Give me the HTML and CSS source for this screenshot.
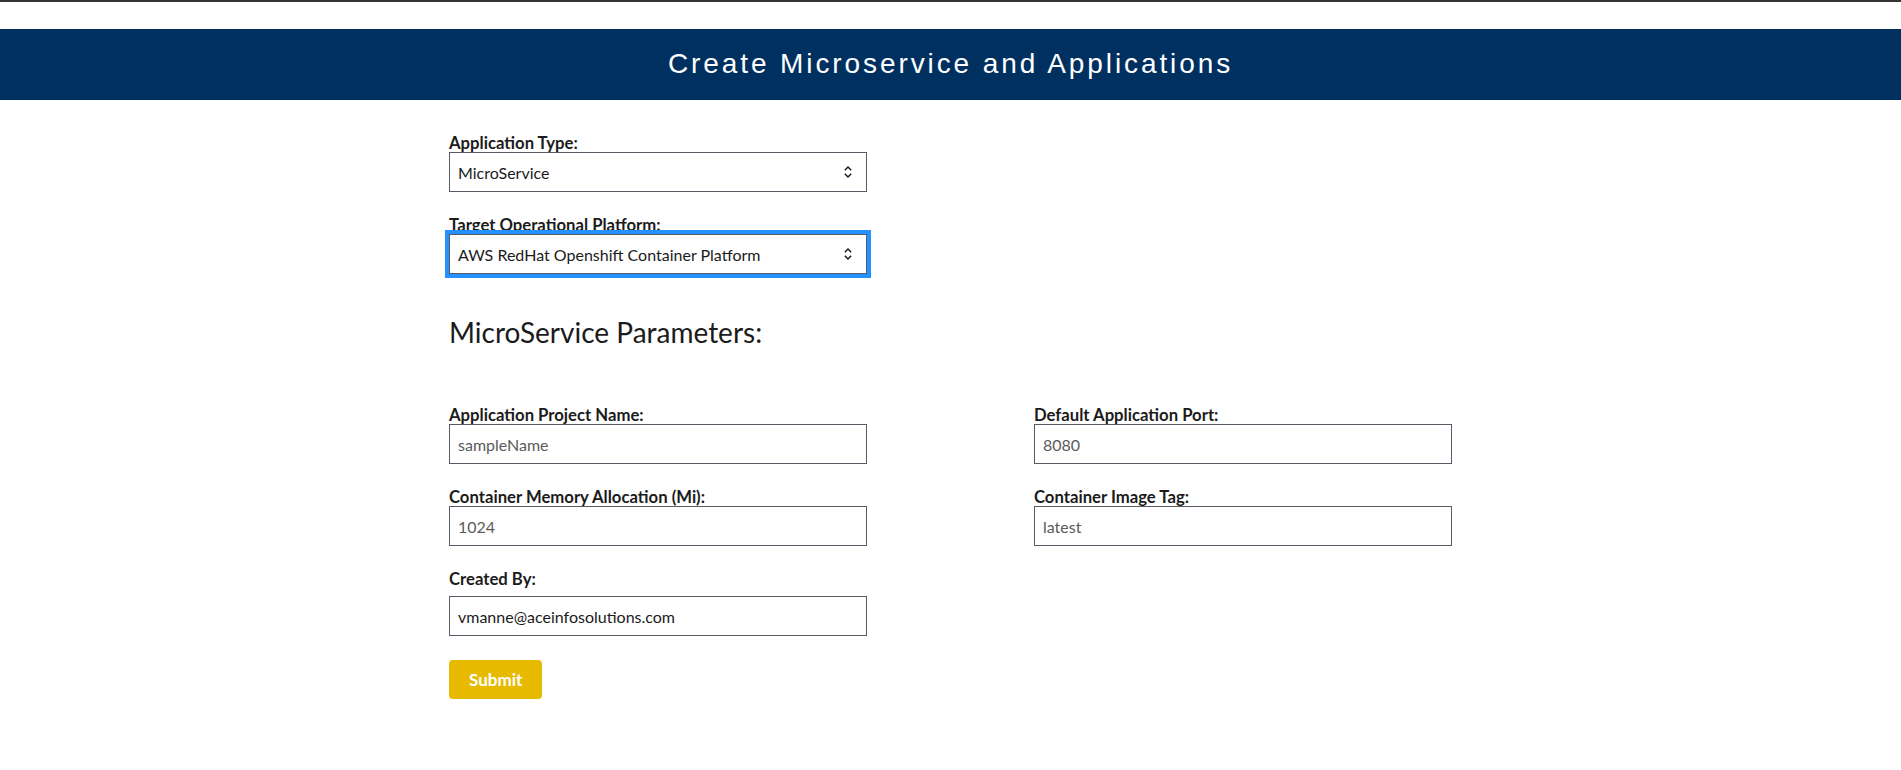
FILE: index.html
```html
<!DOCTYPE html>
<html lang="en">
<head>
<meta charset="utf-8">
<title>Create Microservice and Applications</title>
<link rel="stylesheet" href="styles.css">
</head>
<body>
<div class="topline"></div>
<header class="banner">
  <h1 class="banner-title">Create Microservice and Applications</h1>
</header>
<main class="page">
  <form class="form">
    <div class="field">
      <label class="label" for="apptype">Application Type:</label>
      <div class="select-wrap">
        <select class="select" id="apptype">
          <option>MicroService</option>
        </select>
        <svg class="chev" width="10" height="16" viewBox="0 0 10 16" aria-hidden="true">
          <path d="M1.8 6.2 L5 3 L8.2 6.2" fill="none" stroke="#1b1b1b" stroke-width="1.5"/>
          <path d="M1.8 9.8 L5 13 L8.2 9.8" fill="none" stroke="#1b1b1b" stroke-width="1.5"/>
        </svg>
      </div>
    </div>
    <div class="field">
      <label class="label" for="platform">Target Operational Platform:</label>
      <div class="select-wrap">
        <select class="select focused" id="platform">
          <option>AWS RedHat Openshift Container Platform</option>
        </select>
        <svg class="chev" width="10" height="16" viewBox="0 0 10 16" aria-hidden="true">
          <path d="M1.8 6.2 L5 3 L8.2 6.2" fill="none" stroke="#1b1b1b" stroke-width="1.5"/>
          <path d="M1.8 9.8 L5 13 L8.2 9.8" fill="none" stroke="#1b1b1b" stroke-width="1.5"/>
        </svg>
      </div>
    </div>

    <h2 class="section-title">MicroService Parameters:</h2>

    <div class="grid">
      <div class="field">
        <label class="label" for="pname">Application Project Name:</label>
        <input class="input" id="pname" type="text" placeholder="sampleName">
      </div>
      <div class="field">
        <label class="label" for="port">Default Application Port:</label>
        <input class="input" id="port" type="text" placeholder="8080">
      </div>
      <div class="field">
        <label class="label" for="mem">Container Memory Allocation (Mi):</label>
        <input class="input" id="mem" type="text" placeholder="1024">
      </div>
      <div class="field">
        <label class="label" for="tag">Container Image Tag:</label>
        <input class="input" id="tag" type="text" placeholder="latest">
      </div>
      <div class="field">
        <label class="label" for="by">Created By:</label>
        <input class="input input-spaced" id="by" type="text" value="vmanne@aceinfosolutions.com">
      </div>
    </div>

    <button class="button" type="button">Submit</button>
  </form>
</main>
</body>
</html>
```

FILE: styles.css
```css
* { box-sizing: border-box; }

html, body {
  margin: 0;
  padding: 0;
  background: #ffffff;
  font-family: "Lato", "Liberation Sans", sans-serif;
  color: #1b1b1b;
}

.topline {
  height: 2px;
  background: #333333;
}

.banner {
  margin-top: 27px;
  height: 71px;
  background: #00305f;
  display: flex;
  align-items: center;
  justify-content: center;
}

.banner-title {
  margin: 0;
  color: #ffffff;
  font-family: "Liberation Sans", Arial, sans-serif;
  font-weight: 400;
  font-size: 28px;
  letter-spacing: 2.9px;
  line-height: 1;
  padding-bottom: 2px;
}

.page {
  width: 1003px;
  margin: 0 auto;
  padding-top: 10px;
}

.form { margin: 0; }

.field {
  width: 418px;
}

.label {
  display: block;
  margin-top: 24px;
  font-weight: 700;
  font-size: 16.7px;
  line-height: 18px;
  color: #1b1b1b;
}

.select-wrap {
  position: relative;
  width: 418px;
}

.select,
.input {
  display: block;
  width: 418px;
  height: 40px;
  margin: 0;
  padding: 0 8px;
  border: 1px solid #565c65;
  border-radius: 0;
  background: #ffffff;
  font-family: "Lato", "Liberation Sans", sans-serif;
  font-size: 16px;
  color: #1b1b1b;
}

.select {
  -webkit-appearance: none;
  appearance: none;
  padding-right: 32px;
}

.focused {
  outline: 4px solid #2491ff;
  outline-offset: 0;
}

.chev {
  position: absolute;
  right: 14px;
  top: 12px;
  pointer-events: none;
}

.input::placeholder {
  color: #5b5b5b;
  opacity: 1;
}

.input-spaced { margin-top: 8px; }

.section-title {
  margin: 41px 0 33px;
  font-weight: 400;
  font-size: 28px;
  line-height: 34px;
  color: #1b1b1b;
}

.grid {
  display: grid;
  grid-template-columns: 585px 418px;
}

.button {
  margin-top: 24px;
  height: 39px;
  padding: 0 20px;
  border: 0;
  border-radius: 4px;
  background: #e7ba00;
  color: #ffffff;
  font-family: "Lato", "Liberation Sans", sans-serif;
  font-weight: 700;
  font-size: 17px;
  line-height: 1;
  cursor: pointer;
}
```
